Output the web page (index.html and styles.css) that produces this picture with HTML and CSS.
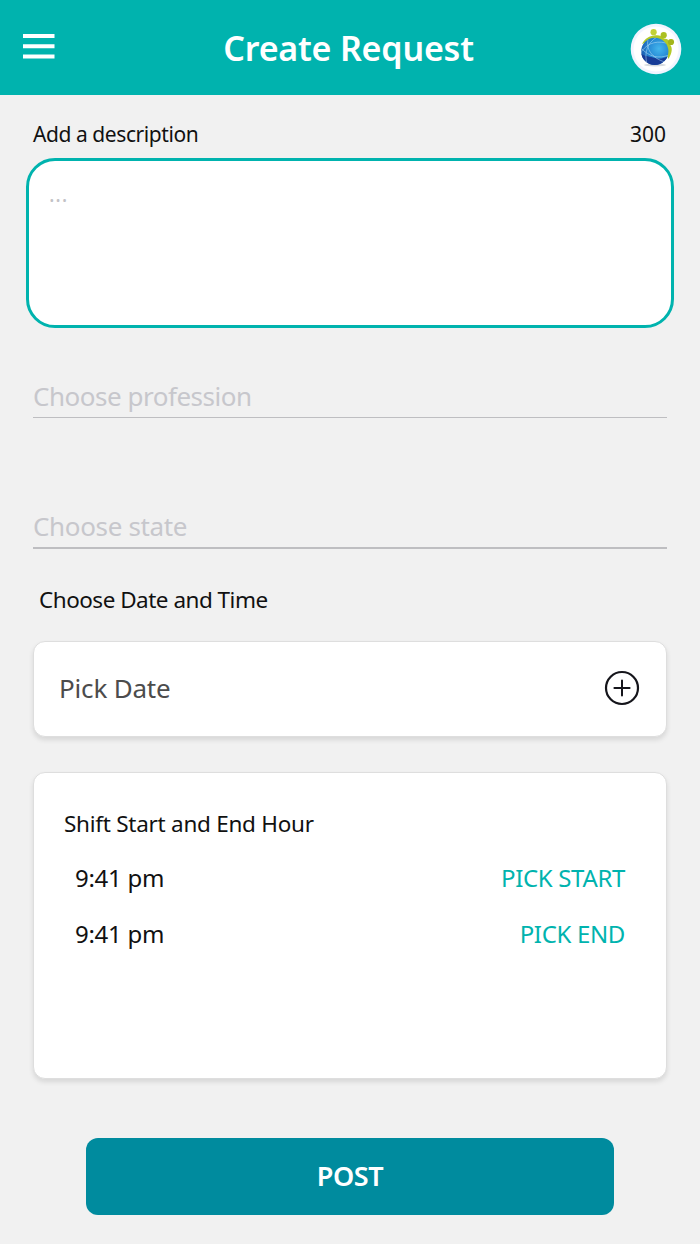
FILE: index.html
```html
<!DOCTYPE html>
<html lang="en">
<head>
<meta charset="utf-8">
<title>Create Request</title>
<link rel="stylesheet" href="styles.css">
</head>
<body>
<header class="topbar">
  <svg class="menu" viewBox="0 0 32 26" aria-label="Menu"><path d="M0 .1h31.5v4H0zM0 10.2h31.5v4H0zM0 20.6h31.5v4H0z" fill="#fff"/></svg>
  <h1 class="title">Create Request</h1>
  <svg class="avatar" viewBox="0 0 52 52" aria-label="Profile">
    <defs>
      <radialGradient id="globe" cx=".65" cy=".4" r=".7"><stop offset="0" stop-color="#43b5ec"/><stop offset=".6" stop-color="#2385d2"/><stop offset="1" stop-color="#1b55aa"/></radialGradient>
      <clipPath id="ball"><circle cx="24.8" cy="28.4" r="13.6"/></clipPath>
    </defs>
    <circle cx="26" cy="26" r="25.3" fill="#f1f4ff"/>
    <circle cx="26" cy="26" r="22.5" fill="#fff"/>
    <ellipse cx="25" cy="42" rx="11" ry="1.5" fill="#d5d9de"/>
    <path d="M12 21C15 15 20 13 24 12.500C29 11.500 32 13 34 15.500C38 15.500 40 18.500 40 21.500C43 25 42 30 38.500 36L34 24L23 16.500Z" fill="#b3c928"/>
    <circle cx="23.6" cy="9.2" r="3.1" fill="#c3d136"/><circle cx="33.7" cy="12.2" r="3.1" fill="#abc021"/><circle cx="41" cy="19" r="3.1" fill="#a3b51b"/>
    <circle cx="24.8" cy="28.4" r="13.6" fill="url(#globe)"/>
    <g clip-path="url(#ball)">
      <path d="M10 30c5 4 9 3 15 5s10-1 15-2v13H10z" fill="#173b96"/>
      <g fill="none" stroke="#b9e0f8" stroke-opacity=".75" stroke-width=".7"><path d="M10 31C15 22 24 17 36 20M18 17c-2 8 3 18 17 22M27 14C17 20 14 30 17 41M11 25c8 9 18 11 28 7"/></g>
    </g>
  </svg>
</header>
<main class="form">
  <div class="label-row"><label for="description">Add a description</label><span class="count">300</span></div>
  <div class="description" id="description">...</div>
  <div class="field">Choose profession</div>
  <div class="field field-state"><span class="state">Choose state</span></div>
  <h2 class="section-title">Choose Date and Time</h2>
  <section class="card date-card">
    <span class="pick-date">Pick Date</span>
    <svg class="plus" viewBox="0 0 36 36" fill="none" stroke="#15151b" stroke-linecap="round"><circle cx="18" cy="18" r="16" stroke-width="2.2"/><path d="M10.400 18h15.200M18 10.400v15.200" stroke-width="2"/></svg>
  </section>
  <section class="card shift-card">
    <h2 class="shift-title">Shift Start and End Hour</h2>
    <div class="time-row"><span class="time">9:41 pm</span><span class="pick pick-start">PICK START</span></div>
    <div class="time-row"><span class="time">9:41 pm</span><span class="pick pick-end">PICK END</span></div>
  </section>
  <button class="post">POST</button>
</main>
</body>
</html>
```
FILE: styles.css
```css
* { box-sizing: border-box; }
body { margin: 0; width: 700px; height: 1244px; background: #f1f1f1; color: #111; font-family: "Noto Sans", sans-serif; white-space: nowrap; }
h1, h2 { margin: 0; font-weight: 400; }
.topbar { height: 95px; background: #00b3ae; display: flex; align-items: flex-start; justify-content: space-between; padding: 0 18px 0 23px; }
.menu { width: 32px; height: 26px; margin-top: 34px; }
.title { font-size: 34px; line-height: 60px; font-weight: 600; letter-spacing: -.2px; color: #fff; margin-top: 18px; margin-left: 12px; }
.avatar { width: 52px; height: 52px; margin-top: 23px; }
.form { display: flex; flex-direction: column; padding: 24px 33px 0; }
.label-row { display: flex; justify-content: space-between; height: 30px; font-size: 21px; line-height: 30px; padding-right: 1px; }
.label-row label { letter-spacing: -.43px; }
.description { height: 170px; margin: 9px -7px 0; border: 3px solid #00b3ae; border-radius: 29px; background: #fff; padding: 18px 20px; color: #c2c2c6; font-size: 21px; line-height: 30px; letter-spacing: .7px; }
.field { margin-top: 48px; height: 42px; border-bottom: 1.5px solid #bebec1; color: #c7c7cc; font-size: 26px; line-height: 40px; letter-spacing: -.48px; }
.field-state { margin-top: 88px; height: 43px; border-bottom-width: 2px; letter-spacing: -.35px; }
.section-title { margin: 36px 0 0 6px; font-size: 22.5px; line-height: 30px; letter-spacing: -.5px; }
.card { border: 1px solid #dedede; border-radius: 12px; background: #fff; box-shadow: 0 3px 5px rgba(0,0,0,.11); }
.date-card { height: 96px; margin-top: 26px; display: flex; align-items: center; justify-content: space-between; padding: 0 26px 3px 25px; }
.pick-date { font-size: 26px; line-height: 40px; letter-spacing: -.18px; color: #4c4c4c; }
.plus { width: 36px; height: 36px; }
.shift-card { height: 307px; margin-top: 35px; padding: 36px 41px 0 30px; }
.shift-title { font-size: 22.5px; line-height: 30px; letter-spacing: -.26px; }
.time-row { display: flex; justify-content: space-between; margin: 21px 0 0 11px; height: 36px; line-height: 36px; font-size: 24px; letter-spacing: -.27px; }
.time-row + .time-row { margin-top: 20px; }
.pick { color: #00b3ae; letter-spacing: -.34px; }
.post { width: 528px; height: 77px; margin: 59px auto 0; border: 0; border-radius: 12px; background: #008b9e; color: #fff; font: 600 27px/40px "Noto Sans", sans-serif; letter-spacing: -.4px; padding: 0 0 2px; }
```
